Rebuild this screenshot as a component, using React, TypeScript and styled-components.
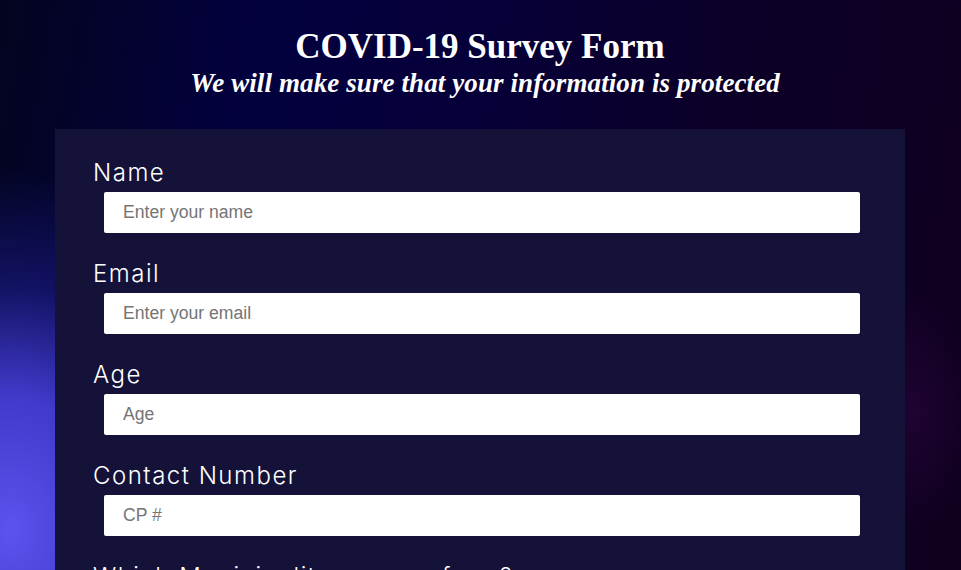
import React from "react";
import styled, { createGlobalStyle } from "styled-components";

const GlobalStyle = createGlobalStyle`
  html, body {
    margin: 0;
    padding: 0;
  }
  body {
    background-color: #0c0022;
    background-image:
      radial-gradient(ellipse 270px 360px at 10px 530px, rgba(92, 82, 238, 1) 0%, rgba(72, 64, 222, 0.88) 38%, rgba(32, 32, 155, 0.5) 68%, rgba(10, 10, 80, 0) 100%),
      radial-gradient(ellipse 60px 120px at 912px 410px, rgba(50, 8, 70, 0.45) 0%, rgba(30, 0, 50, 0) 100%),
      linear-gradient(100deg, #03051f 0%, #03003f 25%, #06003a 45%, #0c0028 70%, #10001f 100%);
    background-attachment: fixed;
    font-family: "Inter", "Liberation Sans", sans-serif;
  }
`;

const Page = styled.div`
  min-height: 100vh;
  display: flex;
  flex-direction: column;
  align-items: center;
  padding: 0 56px 40px 55px;
  box-sizing: border-box;
`;

const Header = styled.header`
  display: flex;
  flex-direction: column;
  align-items: center;
  padding-top: 27px;
  margin-bottom: 30px;
`;

const Title = styled.h1`
  margin: 0;
  font-family: "Liberation Serif", "Times New Roman", serif;
  font-weight: 700;
  font-size: 35px;
  line-height: 40px;
  color: #ffffff;
`;

const Subtitle = styled.p`
  margin: 0 0 0 10px;
  font-family: "Liberation Serif", "Times New Roman", serif;
  font-style: italic;
  font-weight: 700;
  font-size: 27px;
  line-height: 32px;
  color: #ffffff;
  letter-spacing: 0.1px;
`;

const Form = styled.form`
  width: 100%;
  box-sizing: border-box;
  background: #141239;
  padding: 30px 45px 40px 38px;
`;

const Field = styled.div`
  display: flex;
  flex-direction: column;
  margin-bottom: 27px;
`;

const Label = styled.label`
  display: block;
  font-family: "Inter", "Liberation Sans", sans-serif;
  font-weight: 300;
  font-size: 24px;
  line-height: 28px;
  letter-spacing: 1.5px;
  color: #ffffff;
  margin-bottom: 5px;
`;

const Input = styled.input`
  margin-left: 11px;
  height: 41px;
  box-sizing: border-box;
  border: none;
  border-radius: 2px;
  background: #ffffff;
  padding: 0 19px;
  font-family: "Liberation Sans", Arial, sans-serif;
  font-size: 17.6px;
  color: #222;
  outline: none;
  &::placeholder {
    color: #757575;
  }
`;

const fields = [
  { id: "name", label: "Name", placeholder: "Enter your name", type: "text" },
  { id: "email", label: "Email", placeholder: "Enter your email", type: "email" },
  { id: "age", label: "Age", placeholder: "Age", type: "number" },
  { id: "number", label: "Contact Number", placeholder: "CP #", type: "text" },
];

export default function App() {
  return (
    <>
      <GlobalStyle />
      <Page>
        <Header>
          <Title>COVID-19 Survey Form</Title>
          <Subtitle>We will make sure that your information is protected</Subtitle>
        </Header>
        <Form onSubmit={(e) => e.preventDefault()}>
          {fields.map((f) => (
            <Field key={f.id}>
              <Label htmlFor={f.id}>{f.label}</Label>
              <Input id={f.id} type={f.type} placeholder={f.placeholder} />
            </Field>
          ))}
          <Field>
            <Label htmlFor="municipality">Which Municipality are you from?</Label>
            <Input id="municipality" type="text" placeholder="Municipality" />
          </Field>
        </Form>
      </Page>
    </>
  );
}
